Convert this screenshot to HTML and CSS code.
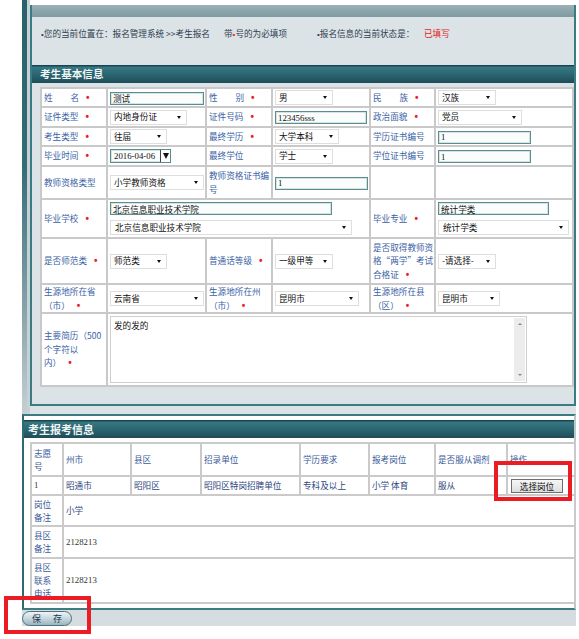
FILE: index.html
```html
<!DOCTYPE html>
<html lang="zh-CN">
<head>
<meta charset="utf-8">
<title>考生报名</title>
<link rel="stylesheet" href="styles.css">
</head>
<body>
<div class="page">
  <div class="frame">
    <div class="panel main">
      <div class="topbar"></div>
      <div class="crumbs">
        <span class="seg s1"><span class="dot">•</span>您的当前位置在：报名管理系统 &gt;&gt;考生报名</span>
        <span class="seg s2">带<span class="dot red">•</span>号的为必填项</span>
        <span class="seg s3"><span class="dot">•</span>报名信息的当前状态是：</span>
        <span class="state">已填写</span>
      </div>
      <h2 class="sec-head">考生基本信息</h2>
      <table class="form">
        <colgroup><col class="c66"><col class="c99"><col class="c66"><col class="c98"><col class="c65"><col class="c138"></colgroup>
        <tr class="h19">
          <th><span class="jl">姓名</span><i class="req">•</i></th>
          <td><input class="txt w94" value="测试"></td>
          <th><span class="jl">性别</span><i class="req">•</i></th>
          <td><span class="sel w58">男</span></td>
          <th><span class="jl">民族</span><i class="req">•</i></th>
          <td><span class="sel w58">汉族</span></td>
        </tr>
        <tr class="h20">
          <th>证件类型<i class="req">•</i></th>
          <td><span class="sel w77">内地身份证</span></td>
          <th>证件号码<i class="req">•</i></th>
          <td><input class="txt num w92" value="123456sss"></td>
          <th>政治面貌<i class="req">•</i></th>
          <td><span class="sel w84">党员</span></td>
        </tr>
        <tr class="h19">
          <th>考生类型<i class="req">•</i></th>
          <td><span class="sel w57">往届</span></td>
          <th>最终学历<i class="req">•</i></th>
          <td><span class="sel w64">大学本科</span></td>
          <th>学历证书编号</th>
          <td><input class="txt num w93" value="1"></td>
        </tr>
        <tr class="h20">
          <th>毕业时间<i class="req">•</i></th>
          <td><span class="date"><span class="dv">2016-04-06</span><span class="db"></span></span></td>
          <th>最终学位</th>
          <td><span class="sel w58">学士</span></td>
          <th>学位证书编号</th>
          <td><input class="txt num w93" value="1"></td>
        </tr>
        <tr class="h33">
          <th>教师资格类型</th>
          <td><span class="sel w94">小学教师资格</span></td>
          <th>教师资格证书编<br>号</th>
          <td><input class="txt num w93" value="1"></td>
          <td></td>
          <td></td>
        </tr>
        <tr class="h39">
          <th>毕业学校<i class="req">•</i></th>
          <td colspan="3">
            <div class="stack">
              <input class="txt w222" value="北京信息职业技术学院">
              <span class="sel w242 pad5">北京信息职业技术学院</span>
            </div>
          </td>
          <th>毕业专业<i class="req">•</i></th>
          <td>
            <div class="stack">
              <input class="txt w111" value="统计学类">
              <span class="sel w131 pad5">统计学类</span>
            </div>
          </td>
        </tr>
        <tr class="h46">
          <th>是否师范类<i class="req">•</i></th>
          <td><span class="sel w57">师范类</span></td>
          <th>普通话等级<i class="req">•</i></th>
          <td><span class="sel w58">一级甲等</span></td>
          <th>是否取得教师资<br>格“两学”考试<br>合格证<i class="req">•</i></th>
          <td><span class="sel w58">-请选择-</span></td>
        </tr>
        <tr class="h29">
          <th>生源地所在省<br>（市）<i class="req">•</i></th>
          <td><span class="sel w94">云南省</span></td>
          <th>生源地所在州<br>（市）<i class="req">•</i></th>
          <td><span class="sel w84">昆明市</span></td>
          <th>生源地所在县<br>（区）<i class="req">•</i></th>
          <td><span class="sel w62">昆明市</span></td>
        </tr>
        <tr class="h73">
          <th>主要简历（500<br>个字符以<br>内）<i class="req">•</i></th>
          <td colspan="5" class="top">
            <div class="memo">
              <div class="memo-text">发的发的</div>
              <div class="memo-bar"><span class="up"></span><span class="down"></span></div>
            </div>
          </td>
        </tr>
      </table>
    </div>
  </div>

  <div class="panel apply">
    <h2 class="sec-head">考生报考信息</h2>
    <table class="list">
      <colgroup><col class="c32"><col class="c68"><col class="c70"><col class="c99"><col class="c69"><col class="c66"><col class="c72"><col class="c68"></colgroup>
      <tr class="h33">
        <th>志愿<br>号</th><th>州市</th><th>县区</th><th>招录单位</th><th>学历要求</th><th>报考岗位</th><th>是否服从调剂</th><th>操作</th>
      </tr>
      <tr class="h19">
        <td class="num">1</td><td>昭通市</td><td>昭阳区</td><td>昭阳区特岗招聘单位</td><td>专科及以上</td><td>小学 体育</td><td>服从</td>
        <td><button class="pick" type="button">选择岗位</button></td>
      </tr>
      <tr class="h31">
        <th>岗位<br>备注</th><td colspan="7">小学</td>
      </tr>
      <tr class="h32">
        <th>县区<br>备注</th><td colspan="7" class="num">2128213</td>
      </tr>
      <tr class="h45">
        <th>县区<br>联系<br>电话</th><td colspan="7" class="num">2128213</td>
      </tr>
    </table>
  </div>

  <div class="actions">
    <button class="save" type="button">保 存</button>
  </div>

  <div class="mark mark-pick"></div>
  <div class="mark mark-save"></div>
</div>
</body>
</html>
```

FILE: styles.css
```css
* { box-sizing: border-box; }

body {
  margin: 0;
  background: #fff;
  font-family: "Noto Sans CJK SC", "Noto Sans", sans-serif;
  font-size: 8.6px;
  color: #111;
}

.page {
  position: relative;
  width: 579px;
  height: 639px;
  overflow: hidden;
}

/* ---------- outer frame of first panel ---------- */
.frame {
  margin-left: 22px;
  width: 554px;
  height: 414px;
  padding: 5px 0 10px 8px;
  background:
    linear-gradient(#28606c, #346c78 40%, #8fa8ae 78%, #c6d0d4) 0 0 / 5px 100% no-repeat,
    linear-gradient(#c5d1d5, #c5d1d5) 5px 0 / 3px 100% no-repeat,
    linear-gradient(#dce3e6, #dce3e6) left bottom / 100% 10px no-repeat,
    #fff;
}

.panel.main {
  width: 546px;
  border: 2px solid #3d7b83;
  border-top: 0;
  background: #dce3e6;
  padding-bottom: 17px;
}

.topbar {
  height: 12px;
  background: linear-gradient(#9ab1b7, #7f9aa1);
}

.crumbs {
  height: 45px;
  padding: 9px 0 0 9px;
  display: flex;
  align-items: baseline;
  line-height: 14px;
  color: #2e3d52;
  white-space: nowrap;
}
.seg { display: inline-block; }
.s1 { width: 183px; }
.s2 { width: 93px; }
.s3 { width: 107px; }
.dot { font-family: "Liberation Sans", sans-serif; font-size: 8px; }
.red { color: #e8202a; }
.state { color: #e41b1b; }

.sec-head {
  margin: 3px 0 0;
  height: 18px;
  line-height: 18px;
  padding-left: 8px;
  font-size: 10.6px;
  font-weight: 700;
  color: #f1f5f5;
  background: linear-gradient(#1b4451 0, #1b4451 1px, #367883 2px, #2b6772 50%, #1f4c58 100%);
}

/* ---------- form table ---------- */
.form {
  margin: 4px 0 0 8px;
  width: 532px;
  height: 298px;
  border-collapse: collapse;
  table-layout: fixed;
  background: #fff;
}
.form th, .form td {
  border: 2px solid #c9c9c9;
  padding: 0 0 0 2px;
  vertical-align: middle;
  text-align: left;
  font-weight: normal;
  line-height: 13.5px;
}
.form th { color: #3a5fa5; }
.form td.top { vertical-align: top; padding-top: 2px; }

.c66 { width: 66px; } .c99 { width: 99px; } .c98 { width: 98px; }
.c65 { width: 65px; } .c138 { width: 138px; }
.c32 { width: 32px; } .c68 { width: 68px; } .c70 { width: 70px; }
.c69 { width: 69px; } .c72 { width: 72px; }

.h19 { height: 19px; } .h20 { height: 20px; } .h29 { height: 29px; }
.h31 { height: 31px; } .h32 { height: 32px; } .h33 { height: 33px; }
.h39 { height: 39px; } .h45 { height: 45px; } .h46 { height: 46px; }
.h73 { height: 73px; }

.jl {
  display: inline-block;
  width: 35px;
  text-align: justify;
  text-align-last: justify;
}
.req {
  font-style: normal;
  font-family: "Liberation Sans", sans-serif;
  font-size: 10px;
  font-weight: 700;
  color: #ea1f2a;
  margin-left: 7px;
}

/* fake select */
.sel {
  display: inline-flex;
  align-items: center;
  justify-content: space-between;
  height: 15px;
  padding: 0 5px 0 3px;
  border: 1px solid #dedede;
  background: #fff;
  color: #111;
  vertical-align: middle;
  white-space: nowrap;
}
.sel::after {
  content: "";
  border-left: 2.5px solid transparent;
  border-right: 2.5px solid transparent;
  border-top: 3px solid #111;
}
.pad5 { padding-left: 4px; }

.txt {
  height: 13px;
  padding: 0 2px;
  border: 1px solid #5d8c8e;
  box-shadow: inset 0 0 0 1px #d3e4e4;
  background: #fbfdfd;
  font: inherit;
  line-height: 11px;
  color: #111;
  vertical-align: middle;
  outline: none;
}
.num { font-family: "Liberation Serif", serif; font-size: 8.8px; }

.w57 { width: 57px; } .w58 { width: 58px; } .w62 { width: 62px; }
.w64 { width: 64px; } .w77 { width: 77px; } .w84 { width: 84px; }
.w92 { width: 92px; } .w93 { width: 93px; } .w94 { width: 94px; }
.w111 { width: 111px; } .w131 { width: 131px; }
.w222 { width: 222px; } .w242 { width: 242px; }

.date {
  display: inline-flex;
  height: 14px;
  width: 61px;
  border: 1px solid #5d8c8e;
  box-shadow: inset 0 0 0 1px #d3e4e4;
  background: #fbfdfd;
  vertical-align: middle;
}
.dv {
  flex: 1;
  padding-left: 3px;
  font-family: "Liberation Serif", serif;
  font-size: 8.8px;
  line-height: 12px;
}
.db {
  width: 10px;
  border-left: 1px solid #444;
  background: #fff;
  display: flex;
  align-items: center;
  justify-content: center;
}
.db::after {
  content: "";
  border-left: 3px solid transparent;
  border-right: 3px solid transparent;
  border-top: 6px solid #111;
}

.stack {
  display: flex;
  flex-direction: column;
  align-items: flex-start;
  gap: 5px;
}

.memo {
  display: flex;
  width: 417px;
  height: 67px;
  border: 1px solid #cfcfcf;
  background: #fff;
}
.memo-text {
  flex: 1;
  padding: 2px 3px;
  line-height: 12px;
}
.memo-bar {
  width: 11px;
  margin: 1px;
  background: #ececec;
  display: flex;
  flex-direction: column;
  justify-content: space-between;
  align-items: center;
  padding: 5px 0;
}
.memo-bar .up {
  border-left: 2px solid transparent;
  border-right: 2px solid transparent;
  border-bottom: 2px solid #888;
}
.memo-bar .down {
  border-left: 2px solid transparent;
  border-right: 2px solid transparent;
  border-top: 2px solid #888;
}

/* ---------- apply panel ---------- */
.panel.apply {
  margin-left: 22px;
  width: 554px;
  border-top: 2px solid #3d7b83;
  border-left: 2px solid #2f6a74;
  border-right: 2px solid #bcc7ca;
  border-bottom: 2px solid #3d7b83;
  background: #fff;
  padding: 4px 0 4px;
}
.panel.apply .sec-head {
  margin: 0;
  padding-left: 4px;
  font-size: 11px;
}

.list {
  margin: 4px 0 0 6px;
  width: 544px;
  height: 160px;
  border-collapse: collapse;
  table-layout: fixed;
}
.list th, .list td {
  border: 2px solid #cacaca;
  padding: 0 0 0 2px;
  text-align: left;
  vertical-align: middle;
  font-weight: normal;
  line-height: 13px;
  color: #3a5a9a;
}
.list td { color: #2d4780; }
.list td.num { color: #333; }

.pick {
  width: 52px;
  height: 14px;
  padding: 0;
  margin-left: 1px;
  border: 1px solid #6e6e6e;
  background: linear-gradient(#f6f6f6, #dcdede);
  font: inherit;
  line-height: 12px;
  color: #111;
}

/* ---------- actions ---------- */
.actions {
  margin-left: 22px;
  width: 554px;
  height: 16px;
  padding-top: 1px;
  background: #d6dde0;
}
.save {
  display: block;
  width: 50px;
  height: 15px;
  padding: 0;
  border: 1px solid #4f6f7d;
  border-radius: 8px;
  background: linear-gradient(#eef4f6, #c6d7dd 50%, #9bb6bf);
  font: inherit;
  font-size: 9px;
  line-height: 13px;
  word-spacing: 10px;
  color: #1f3550;
}

/* ---------- annotation boxes ---------- */
.mark {
  position: absolute;
  border: 4px solid #ec1c24;
}
.mark-pick { left: 494px; top: 461px; width: 78px; height: 40px; }
.mark-save { left: 4px; top: 596px; width: 87px; height: 38px; }
```
